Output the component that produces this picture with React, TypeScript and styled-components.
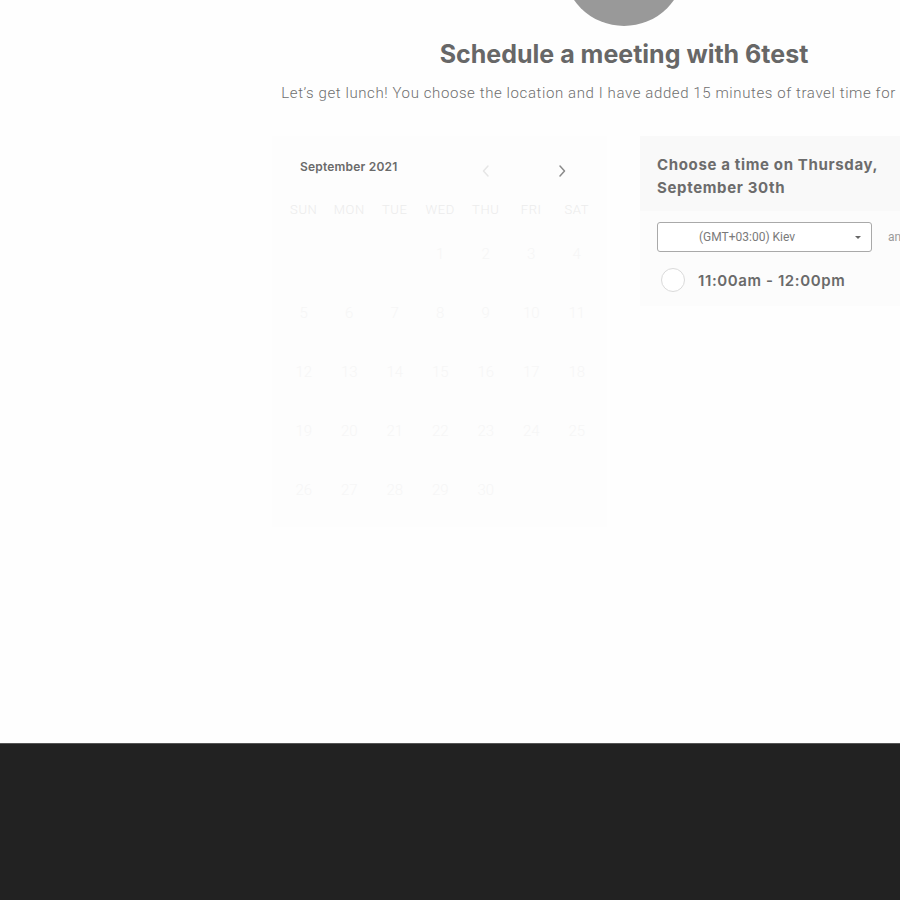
import React from 'react'
import styled, { createGlobalStyle } from 'styled-components'

const GlobalStyle = createGlobalStyle`
  body {
    margin: 0;
    background: #ffffff;
    overflow: hidden;
    font-family: Inter, "Liberation Sans", sans-serif;
  }
`

const Page = styled.div`
  width: 900px;
  height: 900px;
  display: flex;
  flex-direction: column;
  overflow: hidden;
`

const Main = styled.main`
  height: 743px;
  overflow: hidden;
  background: #fefefe;
`

const Stage = styled.div`
  width: 1248px;
  display: flex;
  flex-direction: column;
  align-items: center;
`

const Avatar = styled.div`
  width: 122px;
  height: 122px;
  border-radius: 50%;
  background: #999999;
  margin-top: -96px;
`

const Title = styled.h1`
  margin: 13px 0 0;
  font-size: 25px;
  line-height: 30px;
  font-weight: 700;
  color: #676767;
`

const Subtitle = styled.p`
  margin: 14px 0 0;
  font-family: Roboto, "Liberation Sans", sans-serif;
  font-size: 15px;
  font-weight: 300;
  line-height: 20px;
  letter-spacing: 0.6px;
  color: #6f6f6f;
  white-space: nowrap;
`

const Columns = styled.div`
  margin-top: 33px;
  display: flex;
  gap: 33px;
  align-items: flex-start;
`

const CalendarCard = styled.section`
  width: 335px;
  height: 391px;
  box-sizing: border-box;
  padding: 0 9px;
  background: #fdfdfd;
`

const CalHeader = styled.div`
  display: flex;
  align-items: center;
  height: 60px;
  padding: 4px 0 0 19px;
  box-sizing: border-box;
`

const Month = styled.span`
  flex: 1;
  font-size: 12px;
  font-weight: 600;
  color: #6a6a6a;
  letter-spacing: 0.2px;
  margin-top: -3px;
`

const NavButton = styled.button<{ $faint?: boolean }>`
  width: 24px;
  height: 24px;
  padding: 0;
  border: none;
  background: transparent;
  display: flex;
  align-items: center;
  justify-content: center;
  color: ${p => (p.$faint ? '#e6e6e6' : '#8a8a8a')};
  margin-left: ${p => (p.$faint ? '0' : '52px')};
  margin-top: 6px;
`

const NavSpacer = styled.span`
  width: 24px;
`

const Grid = styled.div`
  display: grid;
  grid-template-columns: repeat(7, 45.5px);
  grid-template-rows: 28px;
  grid-auto-rows: 59px;
`

const DayName = styled.div`
  height: 26px;
  display: flex;
  align-items: center;
  justify-content: center;
  font-family: Roboto, "Liberation Sans", sans-serif;
  font-size: 13px;
  font-weight: 300;
  letter-spacing: 0.6px;
  color: #ececec;
  align-self: start;
`

const DateCell = styled.div`
  display: flex;
  align-items: center;
  justify-content: center;
  font-family: Roboto, "Liberation Sans", sans-serif;
  font-size: 15px;
  font-weight: 300;
  color: #f6f6f6;
`

const TimeCard = styled.section`
  width: 336px;
  background: #fcfcfc;
`

const TimeHeader = styled.div`
  padding: 17px 17px 12px;
  background: #f9f9f9;
  font-size: 15px;
  font-weight: 700;
  line-height: 23px;
  letter-spacing: 0.65px;
  color: #6c6c6c;
`

const TimeBody = styled.div`
  padding: 11px 17px 14px;
`

const ZoneRow = styled.div`
  display: flex;
  align-items: center;
  gap: 16px;
`

const Select = styled.div`
  width: 215px;
  height: 30px;
  box-sizing: border-box;
  border: 1px solid #a9a9a9;
  border-radius: 3px;
  display: flex;
  align-items: center;
  padding: 0 10px 0 41px;
  font-family: Roboto, "Liberation Sans", sans-serif;
  font-size: 12px;
  color: #7a7a7a;
  background: #ffffff;
`

const SelectText = styled.span`
  flex: 1;
`

const Caret = styled.span`
  width: 0;
  height: 0;
  border-left: 3px solid transparent;
  border-right: 3px solid transparent;
  border-top: 3px solid #666666;
`

const ZoneNote = styled.span`
  font-family: Roboto, "Liberation Sans", sans-serif;
  font-size: 12px;
  color: #9a9a9a;
  white-space: nowrap;
`

const Slot = styled.label`
  display: flex;
  align-items: center;
  gap: 13px;
  margin-top: 16px;
  padding-left: 4px;
  font-size: 15px;
  font-weight: 600;
  letter-spacing: 0.6px;
  color: #6a6a6a;
`

const Radio = styled.span`
  width: 22px;
  height: 22px;
  border-radius: 50%;
  border: 1px solid #dadada;
  background: #ffffff;
`

const Footer = styled.footer`
  flex: 1;
  background: #222222;
  border-top: 1px solid #555555;
`

const dayNames = ['SUN', 'MON', 'TUE', 'WED', 'THU', 'FRI', 'SAT']

// September 2021 starts on a Wednesday
const cells: (number | null)[] = [
  null, null, null, 1, 2, 3, 4,
  5, 6, 7, 8, 9, 10, 11,
  12, 13, 14, 15, 16, 17, 18,
  19, 20, 21, 22, 23, 24, 25,
  26, 27, 28, 29, 30, null, null,
]

function Chevron({ left }: { left?: boolean }) {
  return (
    <svg width="10" height="14" viewBox="0 0 10 14" fill="none">
      <path
        d={left ? 'M7 2 L2.5 7 L7 12' : 'M3 2 L7.5 7 L3 12'}
        stroke="currentColor"
        strokeWidth="1.5"
        strokeLinecap="round"
        strokeLinejoin="round"
      />
    </svg>
  )
}

export default function App() {
  return (
    <Page>
      <GlobalStyle />
      <Main>
        <Stage>
          <Avatar />
          <Title>Schedule a meeting with 6test</Title>
          <Subtitle>
            Let’s get lunch! You choose the location and I have added 15 minutes of travel time for each way
          </Subtitle>
          <Columns>
            <CalendarCard>
              <CalHeader>
                <Month>September 2021</Month>
                <NavButton $faint aria-label="Previous month">
                  <Chevron left />
                </NavButton>
                <NavButton aria-label="Next month">
                  <Chevron />
                </NavButton>
                <NavSpacer />
              </CalHeader>
              <Grid>
                {dayNames.map(d => (
                  <DayName key={d}>{d}</DayName>
                ))}
                {cells.map((n, i) => (
                  <DateCell key={i}>{n ?? ''}</DateCell>
                ))}
              </Grid>
            </CalendarCard>
            <TimeCard>
              <TimeHeader>
                Choose a time on Thursday,
                <br />
                September 30th
              </TimeHeader>
              <TimeBody>
                <ZoneRow>
                  <Select>
                    <SelectText>(GMT+03:00) Kiev</SelectText>
                    <Caret />
                  </Select>
                  <ZoneNote>and more</ZoneNote>
                </ZoneRow>
                <Slot>
                  <Radio />
                  11:00am - 12:00pm
                </Slot>
              </TimeBody>
            </TimeCard>
          </Columns>
        </Stage>
      </Main>
      <Footer />
    </Page>
  )
}
